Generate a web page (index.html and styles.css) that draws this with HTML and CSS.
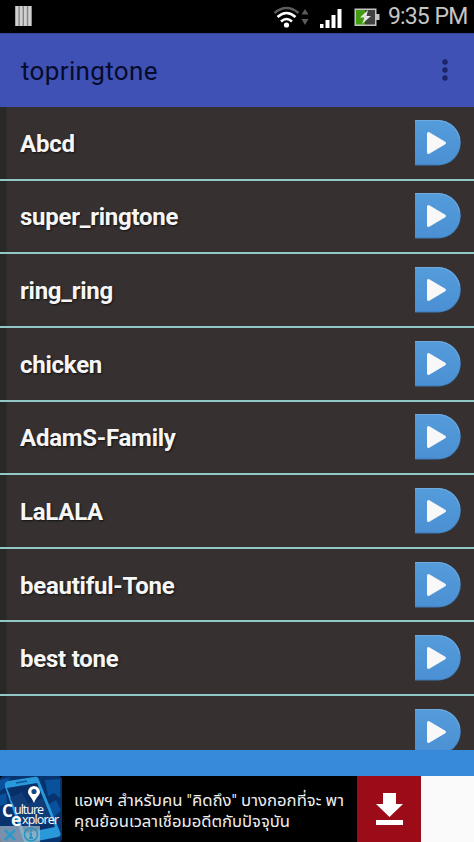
FILE: index.html
```html
<!DOCTYPE html>
<html lang="en">
<head>
<meta charset="utf-8">
<title>topringtone</title>
<link rel="stylesheet" href="styles.css">
</head>
<body>
<svg width="0" height="0" class="defs">
  <defs>
    <linearGradient id="face" x1="0" y1="0" x2="0" y2="1"><stop offset="0" stop-color="#559cdb"/><stop offset="1" stop-color="#4a90d3"/></linearGradient>
    <symbol id="play" viewBox="0 0 48 48">
      <path d="M1 1H24A22.800 22.800 0 0 1 24 46.600H1Z" fill="#3c7ab5"/>
      <path d="M1 1H24A22.300 22.300 0 0 1 24 45.600H1Z" fill="url(#face)"/>
      <path d="M1 1.500H24A22 22 0 0 1 45.500 20" fill="none" stroke="#70a9de"/>
      <path d="M14.500 14.500L30.500 24L14.500 33.500Z" fill="#f8f8f8" stroke="#f8f8f8" stroke-width="3" stroke-linejoin="round"/>
    </symbol>
  </defs>
</svg>
<header class="status">
  <svg class="bars" width="18" height="22" viewBox="0 0 18 22"><path d="M0 1H17V21H0Z" fill="#858585"/><path d="M2 1V21M6.200 1V21M10.400 1V21M14.700 1V21" stroke="#d0d0d0" stroke-width="2.800"/></svg>
  <svg class="signals" width="110" height="30" viewBox="0 0 110 30">
    <g fill="none" stroke="#fff" stroke-width="2.600">
      <path d="M.5 11Q12.500 1 24.500 11" stroke="#5b5b5b"/>
      <path d="M3.500 15Q12.500 7 21.500 15"/><path d="M7 19.500Q12.500 14.500 18 19.500"/>
    </g>
    <circle cx="12.500" cy="23" r="2.600" fill="#fff"/>
    <path d="M27.500 12.500L31 7L34.500 12.500ZM27.500 17H34.500L31 23Z" fill="#5b5b5b"/>
    <path d="M46 22H49.500V26H46ZM51.500 18H55.500V26H51.500ZM57.500 13H61.500V26H57.500ZM63.500 7H67.500V26H63.500Z" fill="#fff"/>
    <path d="M80.500 6.500H102.500V12H105.500V18H102.500V24H80.500Z" fill="#c4c4c4"/>
    <path d="M82 8H91V22.500H82Z" fill="#439b12"/><path d="M91 8H101V22.500H91Z" fill="#414141"/>
    <path d="M94 8L86 15.500H90.500L88 22L97 14H92.500Z" fill="#e5e5e5"/>
  </svg>
  <span class="clock">9:35 PM</span>
</header>
<div class="toolbar"><h1>topringtone</h1>
  <svg width="6" height="24" viewBox="0 0 6 24" fill="#1b2467"><circle cx="3" cy="3" r="2.700"/><circle cx="3" cy="11" r="2.700"/><circle cx="3" cy="19" r="2.700"/></svg>
</div>
<main class="list">
  <div class="row"><span>Abcd</span><svg><use href="#play"/></svg></div>
  <div class="row"><span>super_ringtone</span><svg><use href="#play"/></svg></div>
  <div class="row"><span>ring_ring</span><svg><use href="#play"/></svg></div>
  <div class="row"><span>chicken</span><svg><use href="#play"/></svg></div>
  <div class="row"><span>AdamS-Family</span><svg><use href="#play"/></svg></div>
  <div class="row"><span>LaLALA</span><svg><use href="#play"/></svg></div>
  <div class="row"><span>beautiful-Tone</span><svg><use href="#play"/></svg></div>
  <div class="row"><span>best tone</span><svg><use href="#play"/></svg></div>
  <div class="row"><span></span><svg><use href="#play"/></svg></div>
</main>
<div class="strip"></div>
<footer class="ad">
  <svg class="thumb" width="62" height="66" viewBox="0 0 62 66">
    <rect width="62" height="66" rx="4" fill="#07346f"/>
    <path d="M0 4L10 1L5 12L0 15ZM45 4L60 3V22L54 17L48 20ZM48 29L56 24L61 34L52 43ZM0 19L6 17L7 27L0 30Z" fill="#0a519d"/>
    <path d="M5 11Q4 6 8 5L34 1Q38 0 39 4L60 56Q62 60 58 61L32 66H24Z" fill="#2999db"/>
    <path d="M7 12L37 7L55 51L25 57Z" fill="#082f67"/>
    <path d="M10 22L22 16L28 28L43 22L52 46L26 53Z" fill="#103d78"/>
    <path d="M16 7L27 5" stroke="#0a5799" stroke-width="1.500"/>
    <path d="M34 27C31 20 28 19 28 16A6 6 0 0 1 40 16C40 19 36 21 34 27Z" fill="#fff"/><circle cx="34" cy="15.500" r="2.600" fill="#154985"/>
    <g class="brand"><text x="2" y="41" font-size="17" font-weight="700">C</text><text x="14" y="38" font-size="12.500" textLength="30">ulture</text><text x="11" y="50" font-size="18" font-weight="700">e</text><text x="22" y="47.500" font-size="12.500" textLength="37">xplorer</text></g>
    <path d="M0 50H40V66H0Z" fill="#a9b6c2" opacity=".72"/>
    <path d="M5 54L15 64M15 54L5 64" stroke="#299ac5" stroke-width="2.500"/>
    <circle cx="31" cy="58.500" r="6.500" fill="none" stroke="#2596bf" stroke-width="1.500"/><path d="M31 53.500V55.500M29.500 57.500H31V62M29 62H33" stroke="#2596bf" stroke-width="1.800" fill="none"/>
  </svg>
  <svg class="copy" width="296" height="66" lang="th"><text x="12" y="30" textLength="270" lengthAdjust="spacingAndGlyphs">แอพฯ สำหรับคน "คิดถึง" บางกอกที่จะ พา</text><text x="12" y="51" textLength="216" lengthAdjust="spacingAndGlyphs">คุณย้อนเวลาเชื่อมอดีตกับปัจจุบัน</text></svg>
  <div class="download"><svg width="64" height="66" viewBox="0 0 64 66"><path d="M26 17H39V28H46L32.500 41L19 28H26ZM19 44H46V49H19Z" fill="#fff"/></svg></div>
</footer>
</body>
</html>
```
FILE: styles.css
```css
* { box-sizing: border-box; }
body { margin: 0; width: 474px; height: 842px; overflow: hidden; background: #fafafa; font-family: Roboto, sans-serif; display: flex; flex-direction: column; }
svg { display: block; flex: none; }
.defs { position: absolute; }
.status { height: 33px; flex: none; background: #000; display: flex; align-items: center; padding-left: 15px; }
.bars { margin-right: 241px; margin-bottom: 1px; }
.signals { margin-right: 4px; }
.clock { color: #c5c5c5; font-size: 23px; letter-spacing: -.9px; word-spacing: 1px; white-space: nowrap; }
.toolbar { height: 74px; flex: none; background: #4051b5; border-top: 1px solid #394697; display: flex; align-items: center; justify-content: space-between; padding: 0 26px 0 21px; }
h1 { margin: 0; font: 400 26px Roboto, sans-serif; color: #050b2a; letter-spacing: .35px; }
.list { height: 643px; flex: none; overflow: hidden; background: #363130; }
.row { height: 73.650px; display: flex; align-items: center; justify-content: space-between; padding: 0 12px 0 20px; color: #f6f6f6; font-size: 24px; font-weight: 700; letter-spacing: -.25px; text-shadow: 1px 1px 2px #111; border-bottom: 2px solid #92c9c7; background: linear-gradient(90deg, #282827 6px, #363130 7px); }
.row span { padding-top: 2px; }
.row svg { width: 48px; height: 48px; }
.strip { height: 26px; flex: none; background: #378ad9; }
.ad { height: 66px; flex: none; display: flex; background: #fafafa; }
.thumb { background: #000; }
.brand { fill: #fff; font-family: "Open Sans", sans-serif; font-weight: 500; }
.copy { background: #000; fill: #eee; font: 16px Roboto, "Noto Sans Thai", sans-serif; width: 295px; }
.download { width: 64px; background: #9b0b18; }
```
